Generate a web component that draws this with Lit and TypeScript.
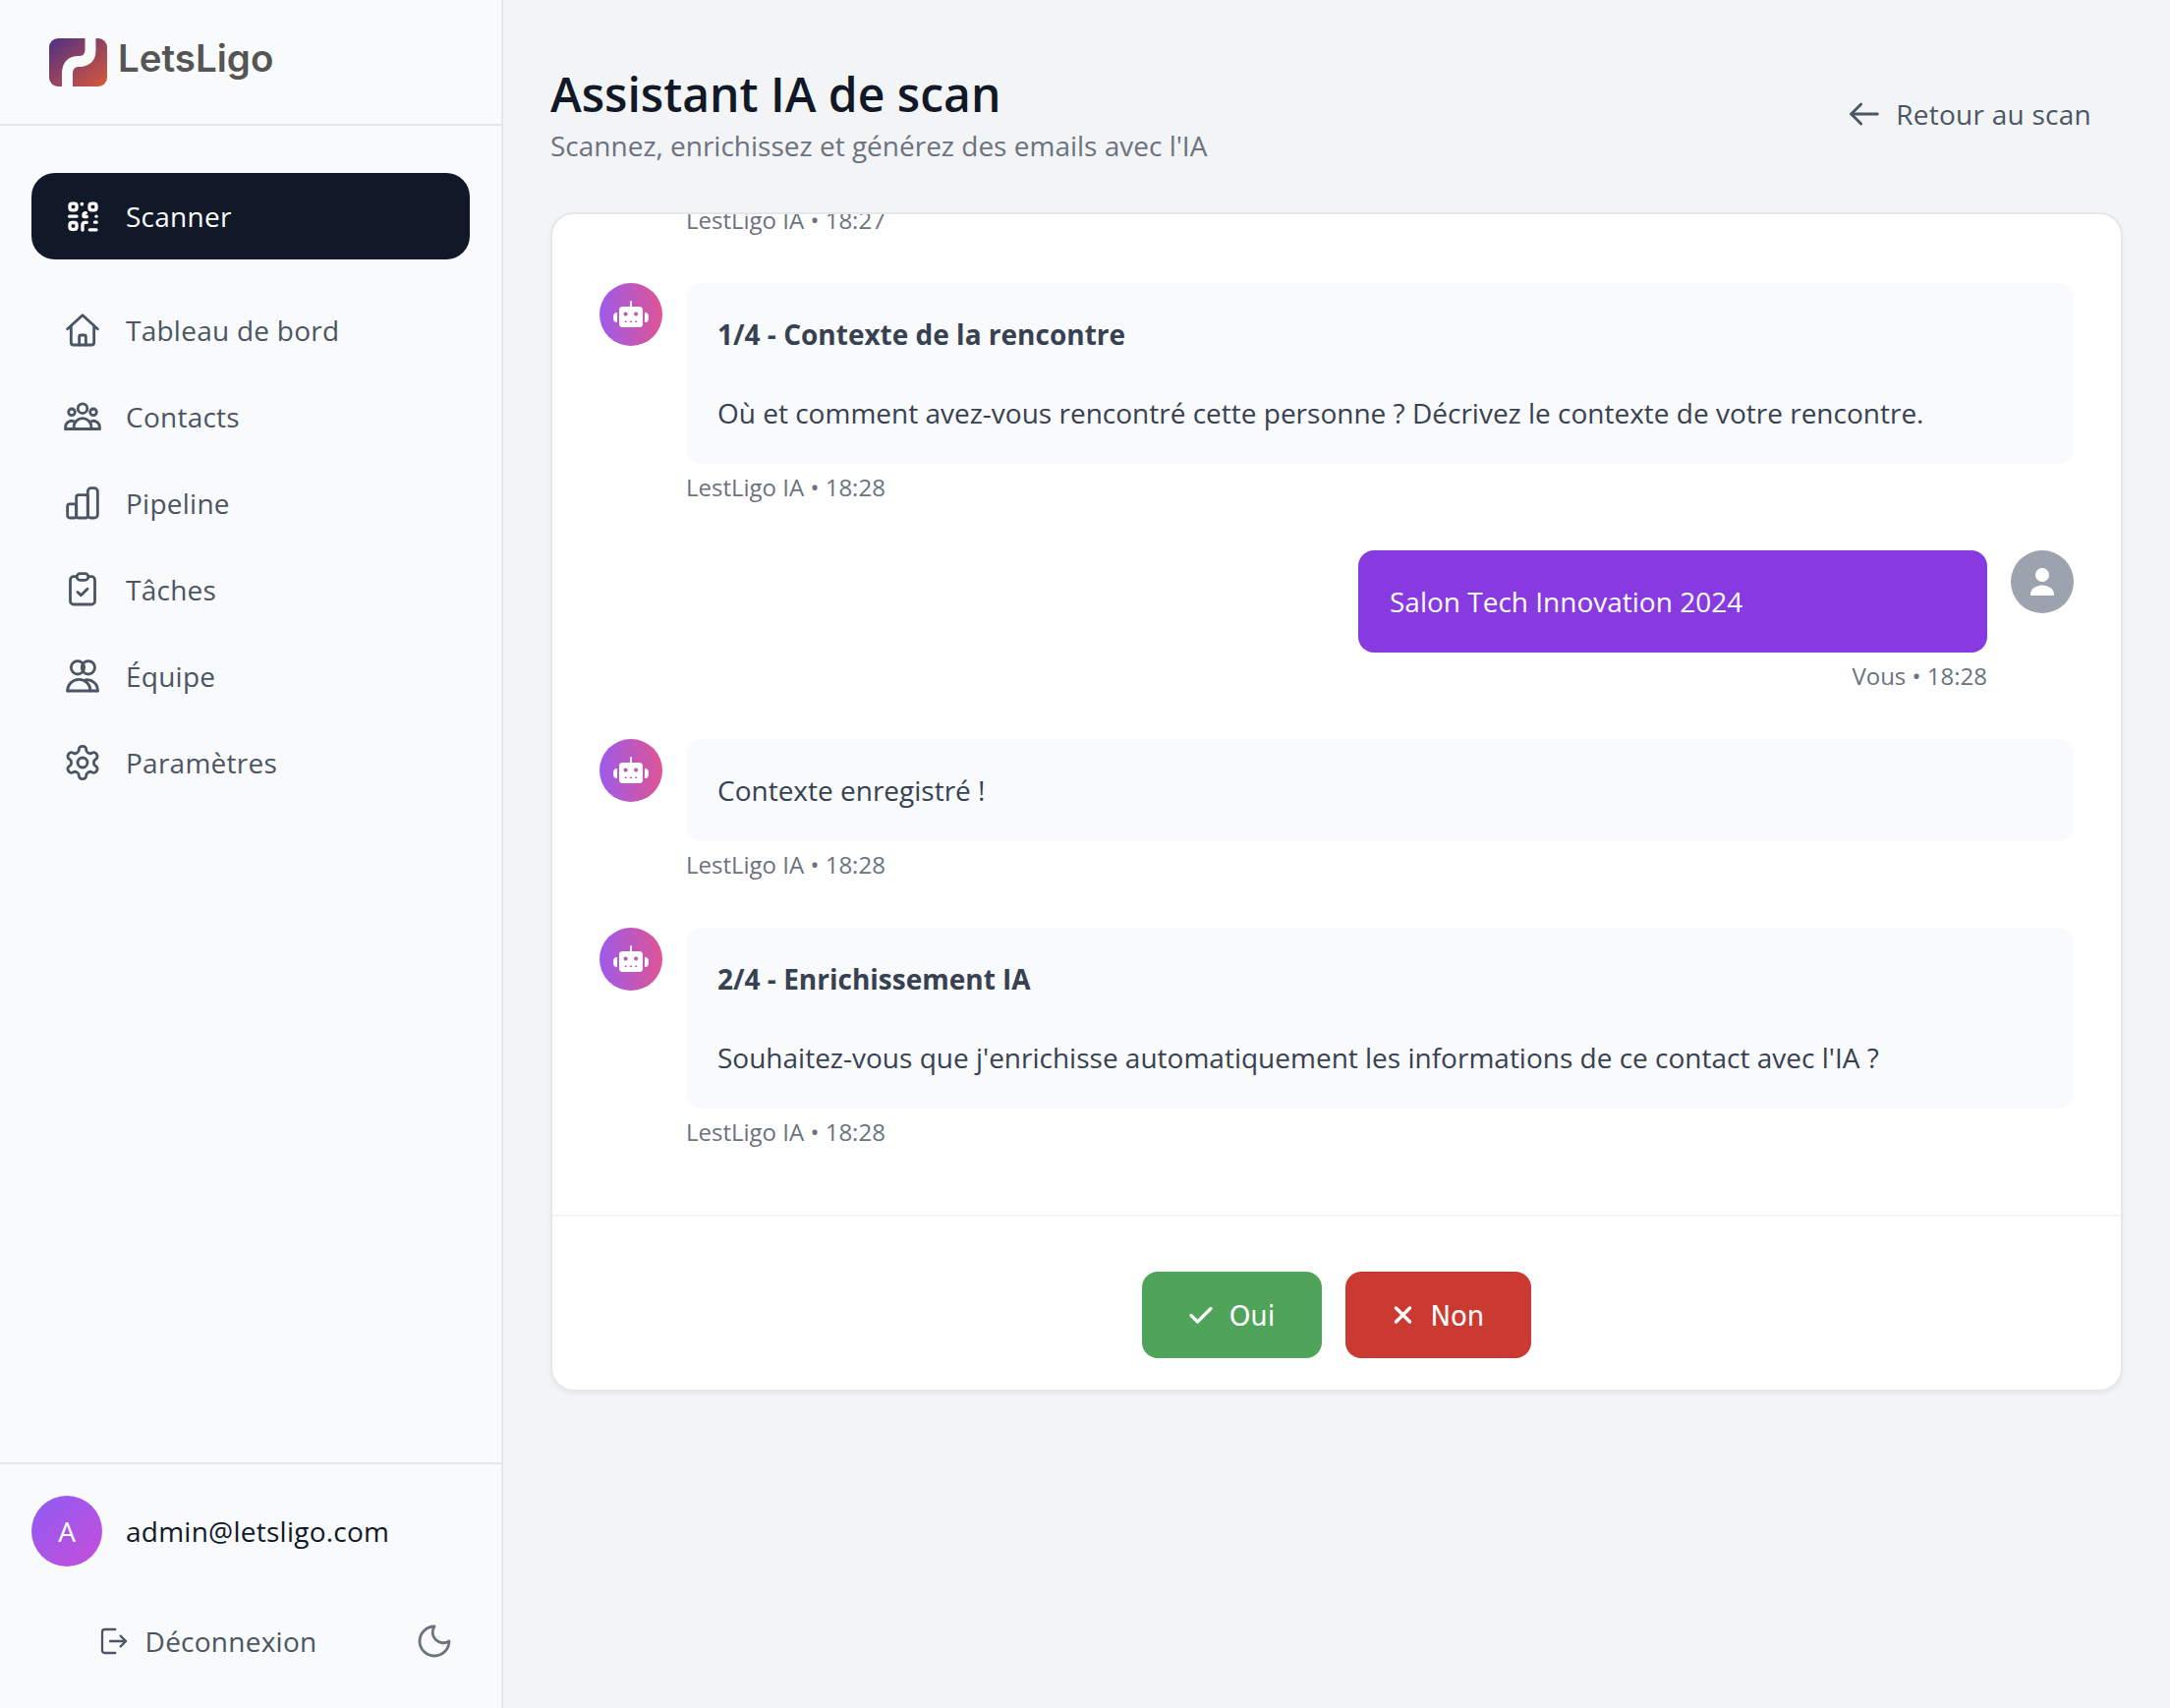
import { LitElement, html, css, svg } from "lit";
import { customElement } from "lit/decorators.js";

const ic = (content: unknown, size = 40) => html`<svg class="ic" width=${size} height=${size} viewBox="0 0 24 24" fill="none" stroke="currentColor" stroke-width="1.7" stroke-linecap="round" stroke-linejoin="round">${content}</svg>`;

const icons = {
  scanner: svg`<g stroke-width="2"><rect x="4.2" y="4.3" width="4.2" height="4" rx="1.4"/><rect x="16.2" y="4.3" width="4.2" height="4" rx="1.4"/><rect x="4.2" y="15.9" width="4.2" height="4.1" rx="1.4"/><path d="M4 12.1h4.4M12 20.4v-3.2q0-1.4 1.400-1.400h1.200M12.600 12.100v-.7q0-1.400 1.400-1.400M13 12.300h1.600M16.400 20.300h4M19.500 15.700h1"/></g><circle cx="11.600" cy="4.600" r="1.100" fill="currentColor" stroke="none"/><circle cx="20.400" cy="12.100" r="1" fill="currentColor" stroke="none"/>`,
  home: svg`<path d="M2.800 11.300 12 2.800l9.200 8.500"/><path d="M5 9.500v10A1.500 1.500 0 0 0 6.500 21h11a1.500 1.500 0 0 0 1.500-1.500v-10"/><path d="M10 21v-5a1 1 0 0 1 1-1h2a1 1 0 0 1 1 1v5"/>`,
  contacts: svg`<circle cx="12" cy="7" r="2.900"/><circle cx="5.400" cy="9.200" r="2"/><circle cx="18.600" cy="9.200" r="2"/><path d="M1.600 19.500h20.800"/><path d="M6.700 19.500v-1.200a5.300 5.300 0 0 1 10.600 0v1.200"/><path d="M1.600 19.500v-1.200a3.700 3.700 0 0 1 5.900-3"/><path d="M22.400 19.500v-1.200a3.700 3.700 0 0 0-5.900-3"/>`,
  pipeline: svg`<rect x="2.800" y="12.500" width="5.400" height="8.500" rx="1.400"/><rect x="8.200" y="7" width="7" height="14" rx="1.400"/><rect x="15.200" y="2.800" width="6" height="18.200" rx="2"/>`,
  tasks: svg`<rect x="4.500" y="4" width="15" height="17" rx="2"/><rect x="8.500" y="2.200" width="7" height="4" rx="2" fill="#f9fafb"/><path d="m9 13.500 2 2 4-4"/>`,
  team: svg`<circle cx="9" cy="6.800" r="4"/><circle cx="15.500" cy="6.800" r="4"/><path d="M2.800 21h18.400"/><path d="M2.800 21a7 7 0 0 1 14 0"/><path d="M13.800 14.300a6.500 6.500 0 0 1 7.400 6.700"/>`,
  settings: svg`<path d="M12.220 2h-.44a2 2 0 0 0-2 2v.18a2 2 0 0 1-1 1.730l-.43.25a2 2 0 0 1-2 0l-.15-.08a2 2 0 0 0-2.730.73l-.22.38a2 2 0 0 0 .73 2.730l.15.1a2 2 0 0 1 1 1.720v.51a2 2 0 0 1-1 1.740l-.15.09a2 2 0 0 0-.73 2.730l.22.38a2 2 0 0 0 2.730.73l.15-.08a2 2 0 0 1 2 0l.43.25a2 2 0 0 1 1 1.730V20a2 2 0 0 0 2 2h.44a2 2 0 0 0 2-2v-.18a2 2 0 0 1 1-1.730l.43-.25a2 2 0 0 1 2 0l.15.08a2 2 0 0 0 2.730-.73l.22-.39a2 2 0 0 0-.73-2.730l-.15-.08a2 2 0 0 1-1-1.740v-.5a2 2 0 0 1 1-1.740l.15-.09a2 2 0 0 0 .73-2.730l-.22-.38a2 2 0 0 0-2.730-.73l-.15.08a2 2 0 0 1-2 0l-.43-.25a2 2 0 0 1-1-1.730V4a2 2 0 0 0-2-2z"/><circle cx="12" cy="12" r="3"/>`,
  logout: svg`<path d="M13 3H5a2 2 0 0 0-2 2v14a2 2 0 0 0 2 2h8"/><path d="M9 12h12"/><path d="m17 8 4 4-4 4"/>`,
  moon: svg`<path d="M12 3a6.500 6.500 0 0 0 9 9 9 9 0 1 1-9-9Z"/>`,
  back: svg`<path d="M20 12H4"/><path d="m10 6-6 6 6 6"/>`,
};

const robot = html`<svg width="36" height="36" viewBox="0 0 24 24" fill="#fff">
  <rect x="4" y="6.700" width="16" height="14" rx="2.400"/>
  <rect x="11.400" y="2.700" width="1.200" height="5" rx=".6"/>
  <path d="M2.700 10.600v6.700A2.400 2.400 0 0 1 .1 15v-2a2.400 2.400 0 0 1 2.600-2.400Z"/>
  <path d="M21.300 10.600v6.700a2.400 2.400 0 0 0 2.600-2.300v-2a2.400 2.400 0 0 0-2.600-2.400Z"/>
  <circle cx="8.400" cy="11.600" r="1.350" fill="#bd55bc"/>
  <circle cx="15.400" cy="11.600" r="1.350" fill="#bd55bc"/>
  <g fill="#bd55bc"><rect x="7.700" y="16.400" width="1.500" height=".9" rx=".4"/><rect x="11.250" y="16.400" width="1.500" height=".9" rx=".4"/><rect x="14.700" y="16.400" width="1.500" height=".9" rx=".4"/></g>
</svg>`;

const person = html`<svg width="28" height="32" viewBox="0 0 28 32" fill="#fff">
  <circle cx="14" cy="9" r="7"/>
  <path d="M2 30v-1c0-6 6-9.500 12-9.500S26 23 26 29v1Z"/>
</svg>`;

@customElement("app-root")
export class AppRoot extends LitElement {
  static styles = css`
    :host { display: block; width: 2208px; height: 1738px; font-family: "Open Sans", sans-serif; background: #f3f4f6; }
    * { box-sizing: border-box; }
    .app { display: flex; width: 100%; height: 100%; }
    .ic { flex: none; display: block; }

    .side { width: 512px; flex: none; height: 100%; background: #f9fafb; border-right: 2px solid #e5e7eb; display: flex; flex-direction: column; }
    .brand { height: 128px; border-bottom: 2px solid #e5e7eb; display: flex; align-items: center; gap: 11px; padding-left: 50px; flex: none; }
    .brand-name { font-family: Inter, sans-serif; font-weight: 600; font-size: 38.5px; color: #555; line-height: 48px; margin-bottom: 8px; }
    .nav { flex: 1; padding: 48px 32px 0; display: flex; flex-direction: column; }
    .nav-item { height: 88px; display: flex; align-items: center; gap: 24px; padding: 0 32px; border-radius: 24px; font-size: 28px; font-weight: 500; letter-spacing: .25px; color: #4b5563; flex: none; }
    .nav-item.active { background: #111827; color: #fff; margin-bottom: 28px; }

    .foot { border-top: 2px solid #e5e7eb; padding: 32px 32px 24px; flex: none; }
    .user { display: flex; align-items: center; gap: 24px; height: 72px; margin-bottom: 32px; }
    .avatar { width: 72px; height: 72px; border-radius: 50%; background: linear-gradient(135deg, #8f5bf2, #c64fdb); color: #fff; font-size: 28px; display: flex; align-items: center; justify-content: center; }
    .email { font-size: 28px; font-weight: 500; letter-spacing: .25px; color: #111827; }
    .actions { display: flex; gap: 16px; height: 88px; }
    .logout { flex: 1; display: flex; align-items: center; justify-content: center; gap: 16px; font-size: 28px; font-weight: 500; letter-spacing: .25px; color: #4b5563; }
    .moon { width: 72px; display: flex; align-items: center; justify-content: center; color: #6b7280; }

    .main { flex: 1; min-width: 0; padding: 64px 48px 0; display: flex; flex-direction: column; }
    .head { display: flex; justify-content: space-between; align-items: center; margin-bottom: 48px; flex: none; }
    h1 { margin: 0; font-size: 48px; line-height: 64px; font-weight: 600; color: #111827; }
    .sub { font-size: 28px; line-height: 40px; color: #6b7280; }
    .back { display: flex; align-items: center; gap: 12px; padding-right: 32px; font-size: 28px; font-weight: 500; letter-spacing: .25px; color: #4b5563; }

    .card { height: 1200px; background: #fff; border: 2px solid #e5e7eb; border-radius: 24px; box-shadow: 0 2px 4px rgba(0,0,0,.06); display: flex; flex-direction: column; overflow: hidden; }
    .msgs { flex: 1; min-height: 0; overflow: hidden; display: flex; flex-direction: column; justify-content: flex-end; gap: 48px; padding: 0 48px 68px; }
    .msg { display: flex; gap: 24px; flex: none; }
    .msg.me { justify-content: flex-end; }
    .av { width: 64px; height: 64px; border-radius: 50%; flex: none; display: flex; align-items: center; justify-content: center; }
    .av.bot { background: linear-gradient(90deg, #9f5aea, #dc5594); }
    .av.me { background: #9ca3af; }
    .body { flex: 1; min-width: 0; }
    .me .body { flex: none; width: 640px; }
    .bubble { background: #f9fafb; border-radius: 16px; padding: 32px; font-size: 28px; line-height: 40px; color: #374151; }
    .bubble b { display: block; font-weight: 700; margin-bottom: 40px; }
    .me .bubble { background: #873adf; color: #fff; }
    .time { margin-top: 8px; font-size: 24px; line-height: 32px; color: #6b7280; }
    .me .time { text-align: right; }
    .ghost { height: 32px; }

    .answers { flex: none; border-top: 2px solid #f3f4f6; padding: 56px 0 32px; display: flex; justify-content: center; gap: 24px; }
    .btn { height: 88px; padding: 0 48px; border-radius: 16px; display: flex; align-items: center; gap: 17px; color: #fff; font-family: "DejaVu Sans", sans-serif; font-size: 27.5px; }
    .btn span { padding-top: 2px; }
    .btn.yes { background: #4fa459; }
    .btn.no { background: #cb3a31; }
  `;

  private nav() {
    const items: [string, unknown][] = [
      ["Tableau de bord", icons.home],
      ["Contacts", icons.contacts],
      ["Pipeline", icons.pipeline],
      ["Tâches", icons.tasks],
      ["Équipe", icons.team],
      ["Paramètres", icons.settings],
    ];
    return items.map(([l, i]) => html`<div class="nav-item">${ic(i)}<span>${l}</span></div>`);
  }

  private bot(content: unknown, time: string) {
    return html`<div class="msg">
      <div class="av bot">${robot}</div>
      <div class="body">
        <div class="bubble">${content}</div>
        <div class="time">LestLigo IA • ${time}</div>
      </div>
    </div>`;
  }

  render() {
    return html`<div class="app">
      <aside class="side">
        <div class="brand">
          <svg width="59" height="49" viewBox="0 0 59 49">
            <defs><linearGradient id="lg" x1="0" y1="0" x2="1" y2="1"><stop offset="0" stop-color="#4f2f83"/><stop offset="1" stop-color="#d8593a"/></linearGradient></defs>
            <rect width="59" height="49" rx="9" fill="url(#lg)"/>
            <path d="M42 -2V12Q42 22 32 23.500H29Q19 24.500 18.500 35V51" fill="none" stroke="#f9fafb" stroke-width="11"/>
          </svg>
          <span class="brand-name">LetsLigo</span>
        </div>
        <nav class="nav">
          <div class="nav-item active">${ic(icons.scanner)}<span>Scanner</span></div>
          ${this.nav()}
        </nav>
        <div class="foot">
          <div class="user"><div class="avatar">A</div><span class="email">admin@letsligo.com</span></div>
          <div class="actions">
            <div class="logout">${ic(icons.logout, 32)}<span>Déconnexion</span></div>
            <div class="moon">${ic(icons.moon)}</div>
          </div>
        </div>
      </aside>
      <main class="main">
        <header class="head">
          <div><h1>Assistant IA de scan</h1><div class="sub">Scannez, enrichissez et générez des emails avec l'IA</div></div>
          <div class="back">${ic(icons.back)}<span>Retour au scan</span></div>
        </header>
        <section class="card">
          <div class="msgs">
            <div class="msg"><div class="av ghost"></div><div class="body"><div class="time">LestLigo IA • 18:27</div></div></div>
            ${this.bot(html`<b>1/4 - Contexte de la rencontre</b>Où et comment avez-vous rencontré cette personne ? Décrivez le contexte de votre rencontre.`, "18:28")}
            <div class="msg me">
              <div class="body"><div class="bubble">Salon Tech Innovation 2024</div><div class="time">Vous • 18:28</div></div>
              <div class="av me">${person}</div>
            </div>
            ${this.bot("Contexte enregistré !", "18:28")}
            ${this.bot(html`<b>2/4 - Enrichissement IA</b>Souhaitez-vous que j'enrichisse automatiquement les informations de ce contact avec l'IA ?`, "18:28")}
          </div>
          <div class="answers">
            <div class="btn yes">
              <svg width="24" height="18" viewBox="0 0 24 18" fill="none" stroke="#fff" stroke-width="3.200" stroke-linecap="round" stroke-linejoin="round"><path d="M2 9.500 8.500 16 22 2.500"/></svg>
              <span>Oui</span>
            </div>
            <div class="btn no">
              <svg width="21" height="18" viewBox="0 0 21 18" fill="none" stroke="#fff" stroke-width="3.400" stroke-linecap="round"><path d="M3.500 2 17.500 16M17.500 2 3.500 16"/></svg>
              <span>Non</span>
            </div>
          </div>
        </section>
      </main>
    </div>`;
  }
}
